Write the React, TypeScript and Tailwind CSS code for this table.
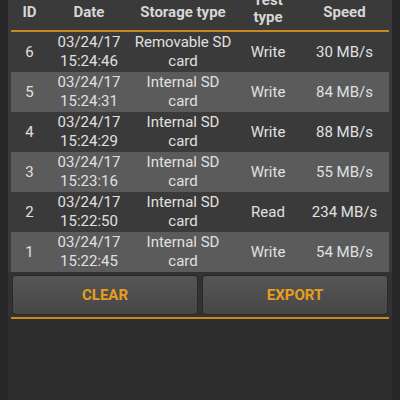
import React from "react";

const rows = [
  { id: 6, date: "03/24/17", time: "15:24:46", storage: "Removable SD", test: "Write", speed: "30 MB/s" },
  { id: 5, date: "03/24/17", time: "15:24:31", storage: "Internal SD", test: "Write", speed: "84 MB/s" },
  { id: 4, date: "03/24/17", time: "15:24:29", storage: "Internal SD", test: "Write", speed: "88 MB/s" },
  { id: 3, date: "03/24/17", time: "15:23:16", storage: "Internal SD", test: "Write", speed: "55 MB/s" },
  { id: 2, date: "03/24/17", time: "15:22:50", storage: "Internal SD", test: "Read", speed: "234 MB/s" },
  { id: 1, date: "03/24/17", time: "15:22:45", storage: "Internal SD", test: "Write", speed: "54 MB/s" },
];

const cols = "grid grid-cols-[37px_82px_106px_64px_89px]";

const App = () => {
  return (
    <div
      className="w-[400px] h-[400px] bg-[#262626] px-[8px] overflow-hidden"
      style={{ fontFamily: "Roboto, 'Liberation Sans', sans-serif" }}
    >
      <div className="h-full bg-[#2d2d2d] flex flex-col">
        <div className="bg-[#3a3a3a] px-[3px]">
          {/* Header */}
          <div className={`${cols} grid-rows-[24px] h-[30px] items-center text-[15px] font-bold text-[#d6d6d6] leading-[17px] pb-[6px]`}>
            <div className="text-center">ID</div>
            <div className="text-center">Date</div>
            <div className="text-center">Storage type</div>
            <div className="text-center self-start -mt-[8px]">Test<br />type</div>
            <div className="text-center">Speed</div>
          </div>
          <div className="h-[2px] bg-[#c8891e]" />
          {/* Rows */}
          {rows.map((r, idx) => (
            <div
              key={r.id}
              className={`${cols} h-[40px] items-center text-[15px] leading-[19px] text-[#e0e0e0] ${
                idx % 2 === 1 ? "bg-[#5b5b5b]" : "bg-[#3a3a3a]"
              }`}
            >
              <div className="text-center">{r.id}</div>
              <div className="text-center">
                {r.date}
                <br />
                {r.time}
              </div>
              <div className="text-center">
                {r.storage}
                <br />
                card
              </div>
              <div className="text-center">{r.test}</div>
              <div className="text-center">{r.speed}</div>
            </div>
          ))}
        </div>
        {/* Buttons */}
        <div className="bg-[#323232] px-[4px] pt-[3px] pb-[2px] flex gap-[4px]">
          {["CLEAR", "EXPORT"].map((label) => (
            <button
              key={label}
              className="flex-1 h-[40px] rounded-[4px] bg-gradient-to-b from-[#555555] to-[#474747] border border-[#2a2a2a] text-[#e89d1f] text-[15px] font-bold"
            >
              {label}
            </button>
          ))}
        </div>
        <div className="h-[2px] bg-[#c8891e] mx-[3px]" />
      </div>
    </div>
  );
};

export default App;
